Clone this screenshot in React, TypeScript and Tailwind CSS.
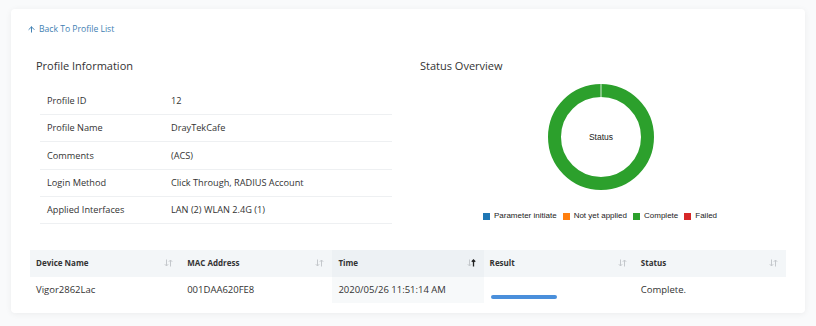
import { ArrowUp } from 'lucide-react';

const profileRows = [
  { label: 'Profile ID', value: '12' },
  { label: 'Profile Name', value: 'DrayTekCafe' },
  { label: 'Comments', value: '(ACS)' },
  { label: 'Login Method', value: 'Click Through, RADIUS Account' },
  { label: 'Applied Interfaces', value: 'LAN (2) WLAN 2.4G (1)' },
];

const legend = [
  { label: 'Parameter initiate', color: 'bg-[#1f77b4]' },
  { label: 'Not yet applied', color: 'bg-[#ff7f0e]' },
  { label: 'Complete', color: 'bg-[#2ca02c]' },
  { label: 'Failed', color: 'bg-[#d62728]' },
];

const columns = ['Device Name', 'MAC Address', 'Time', 'Result', 'Status'];

function SortIcon({ active }: { active?: boolean }) {
  return (
    <svg width="9" height="8" viewBox="0 0 9 8" className="shrink-0">
      {/* down arrow */}
      <path d="M2.5 0.5 V7 M0.8 5.2 L2.5 7 L4.2 5.2" fill="none" stroke="#c4c8cc" strokeWidth="1" />
      {/* up arrow */}
      <path
        d="M6.5 7.5 V1 M4.8 2.8 L6.5 1 L8.2 2.8"
        fill="none"
        stroke={active ? '#222' : '#c4c8cc'}
        strokeWidth={active ? 1.3 : 1}
      />
    </svg>
  );
}

function Donut() {
  return (
    <svg width="106" height="106" viewBox="0 0 106 106">
      <circle cx="53" cy="53" r="46.5" fill="none" stroke="#2ca02c" strokeWidth="13" />
      <line x1="53" y1="0" x2="53" y2="14" stroke="#ffffff" strokeWidth="0.8" />
      <text
        x="53"
        y="56"
        textAnchor="middle"
        fontSize="8.5"
        fill="#222"
        fontFamily="'Liberation Sans', Arial, sans-serif"
      >
        Status
      </text>
    </svg>
  );
}

export default function App() {
  return (
    <div className="w-[816px] h-[326px] bg-[#f9fafb] pt-[9px] pl-[11px] font-['Open_Sans',sans-serif]">
      <div className="w-[794px] h-[304px] bg-white rounded-[4px] shadow-[0_1px_6px_rgba(0,0,0,0.06)] pt-[14px]">
        {/* back link */}
        <div className="pl-[16px] flex items-center gap-[3px] h-[12px] text-[8.6px] text-[#3f7fb3]">
          <ArrowUp size={9} strokeWidth={2.6} />
          <span>Back To Profile List</span>
        </div>

        <div className="flex pl-[25px] pr-[19px] mt-[23px]">
          {/* profile info */}
          <div className="w-[384px]">
            <h2 className="text-[11px] leading-[15px] text-[#333]">Profile Information</h2>
            <div className="mt-[15px] ml-[4px] w-[352px]">
              {profileRows.map((row) => (
                <div
                  key={row.label}
                  className="flex items-center h-[27.2px] border-b border-[#eef0f2] text-[9.2px] text-[#333]"
                >
                  <span className="w-[131px] pl-[7px]">{row.label}</span>
                  <span>{row.value}</span>
                </div>
              ))}
            </div>
          </div>

          {/* status overview */}
          <div className="flex-1">
            <h2 className="text-[11px] leading-[15px] text-[#333]">Status Overview</h2>
            <div className="flex justify-center mt-[11px] mr-[4px]">
              <Donut />
            </div>
            <div className="flex justify-center items-center gap-[6px] mt-[21px] mr-[6px] text-[8px] leading-[10px] text-[#222] font-['Liberation_Sans',Arial,sans-serif]">
              {legend.map((item) => (
                <div key={item.label} className="flex items-center gap-[4px]">
                  <span className={`w-[7px] h-[7px] ${item.color}`} />
                  <span>{item.label}</span>
                </div>
              ))}
            </div>
          </div>
        </div>

        {/* device table */}
        <div className="mx-[19px] mt-[26px]">
          <div className="grid grid-cols-5 h-[27px] bg-[#f3f6f8]">
            {columns.map((col) => (
              <div
                key={col}
                className={`flex items-center justify-between pl-[6px] pr-[8px] text-[8px] font-bold text-[#333] ${
                  col === 'Time' ? 'bg-[#edf1f4]' : ''
                }`}
              >
                <span>{col}</span>
                <SortIcon active={col === 'Time'} />
              </div>
            ))}
          </div>
          <div className="grid grid-cols-5 h-[26px] text-[9.5px] text-[#333]">
            <div className="flex items-center pl-[6px]">Vigor2862Lac</div>
            <div className="flex items-center pl-[6px]">001DAA620FE8</div>
            <div className="flex items-center pl-[6px] bg-[#f7f9fa]">2020/05/26 11:51:14 AM</div>
            <div className="flex items-end pl-[7px] pb-[4px]">
              <div className="w-[66px] h-[4px] rounded-full bg-[#4a8fdb]" />
            </div>
            <div className="flex items-center pl-[6px]">Complete.</div>
          </div>
        </div>
      </div>
    </div>
  );
}
